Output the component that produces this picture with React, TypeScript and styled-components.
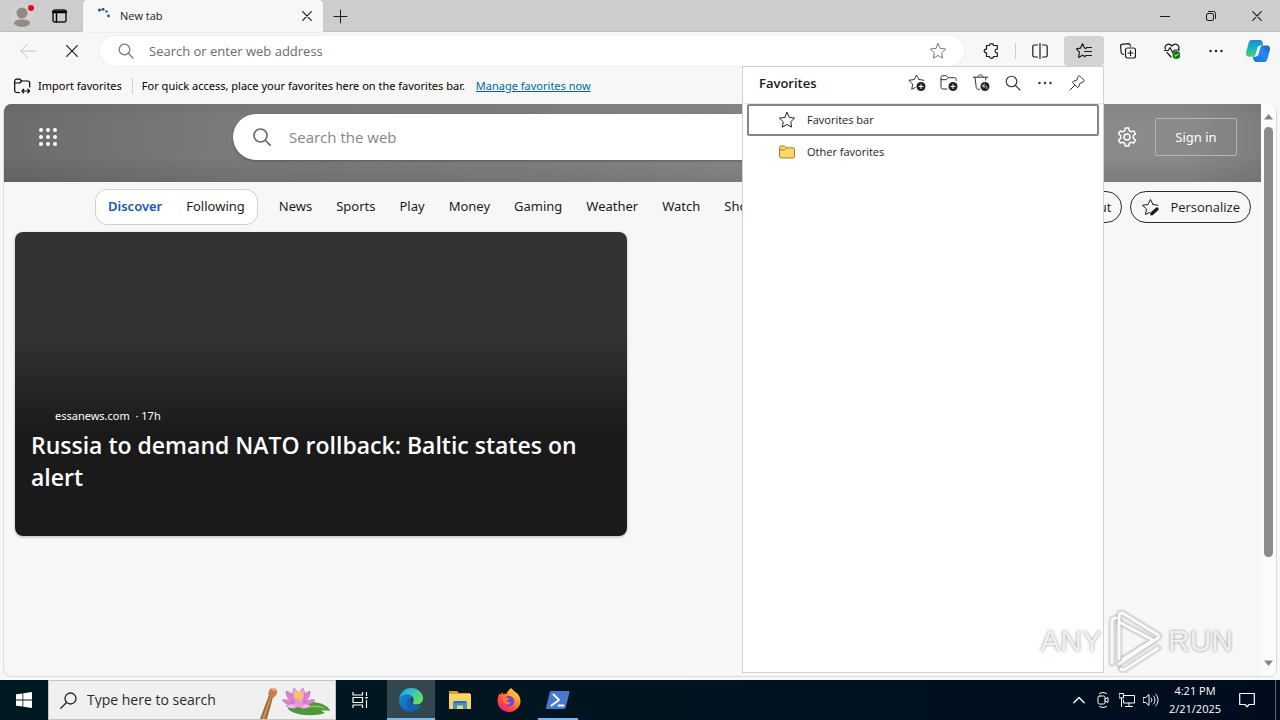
import React from 'react';
import styled, { createGlobalStyle, css } from 'styled-components';

const GlobalStyle = createGlobalStyle`
  *, *::before, *::after { box-sizing: border-box; }
  body { margin: 0; background: #f7f7f7; color: #1b1b1b; font: 12px/16px "Open Sans", "Noto Sans", sans-serif; }
  button { border: 0; background: none; padding: 0; color: inherit; font: inherit; }
  input { border: 0; background: none; padding: 0; outline: 0; color: inherit; font: inherit; min-width: 0; }
  svg { display: block; flex: none; }
  ul { list-style: none; margin: 0; padding: 0; }
`;

const NOTO = '"Noto Sans", "Open Sans", sans-serif';

/* ---------- icon base ---------- */

type IconProps = { size?: number; w?: number; h?: number; stroke?: number; children: React.ReactNode };
const Icon = ({ size = 16, w, h, stroke = 1, children }: IconProps) => (
  <svg
    width={w ?? size}
    height={h ?? size}
    viewBox={`0 0 ${w ?? size} ${h ?? size}`}
    fill="none"
    stroke="currentColor"
    strokeWidth={stroke}
    strokeLinecap="round"
    strokeLinejoin="round"
    aria-hidden="true"
  >
    {children}
  </svg>
);

const STAR = 'M8 .5l2.300 4.900 5.300.7-3.900 3.700 1 5.300L8 12.500l-4.700 2.600 1-5.300L.4 6.100l5.300-.7z';

const StarIcon = () => <Icon><path d={STAR} /></Icon>;

const SearchIcon = ({ stroke = 1 }: { stroke?: number }) => (
  <Icon stroke={stroke}><circle cx="6.500" cy="6.500" r="5.300" /><path d="M10.500 10.500l4.500 4.500" /></Icon>
);

const BadgePlus = () => (
  <g><circle cx="13" cy="12.500" r="4.500" fill="#222" stroke="none" /><path d="M13 10.500v4M11 12.500h4" stroke="#fff" /></g>
);

const DotsIcon = () => (
  <Icon><g fill="currentColor" stroke="none"><circle cx="2.500" cy="8" r="1.200" /><circle cx="8" cy="8" r="1.200" /><circle cx="13.500" cy="8" r="1.200" /></g></Icon>
);

const CloseIcon = ({ size = 10 }: { size?: number }) => (
  <Icon size={size} stroke={1.200}><path d={`M.7 .7L${size - 0.7} ${size - 0.7}M${size - 0.7} .7L.7 ${size - 0.7}`} /></Icon>
);

/* ---------- shell ---------- */

const Screen = styled.div`
  display: flex;
  flex-direction: column;
  min-height: 100vh;
`;

const Browser = styled.div`
  position: relative;
  flex: 1;
  display: flex;
  flex-direction: column;
  background: #f7f7f7;
  padding-bottom: 3px;
`;

const TabStrip = styled.header`
  display: flex;
  height: 32px;
  background: #cdcdcd;
  box-shadow: inset 0 -1px #bdbdbd;
`;

const StripTools = styled.div`
  display: flex;
  align-items: center;
  width: 83px;
  padding-left: 10px;
  gap: 16px;
`;

const Tab = styled.div`
  display: flex;
  align-items: center;
  width: 240px;
  padding: 0 11px 0 14px;
  background: #f7f7f7;
  border-radius: 4px 4px 0 0;
  box-shadow: 0 0 1px #999;
`;

const TabTitle = styled.span`
  flex: 1;
  margin-left: 9px;
  font-size: 11px;
`;

const NewTabButton = styled.button`
  width: 34px;
  display: grid;
  place-items: center;
`;

const WindowControls = styled.div`
  display: flex;
  margin-left: auto;
`;

const WindowButton = styled.button`
  width: 46px;
  display: grid;
  place-items: center;
`;

const Toolbar = styled.div`
  display: flex;
  align-items: center;
  gap: 4px;
  height: 38px;
  padding: 0 4px 0 8px;
`;

const ToolButton = styled.button<{ $active?: boolean; $width?: number }>`
  width: ${(p) => p.$width ?? 40}px;
  height: 30px;
  display: grid;
  place-items: center;
  border-radius: 4px;
  background: ${(p) => (p.$active ? '#d3d3d3' : 'transparent')};
  &:disabled { color: #c4c4c4; }
`;

const ToolDivider = styled.span`
  width: 1px;
  height: 16px;
  background: #cfcfcf;
`;

const AddressBar = styled.label`
  flex: 1;
  display: flex;
  align-items: center;
  gap: 15px;
  height: 30px;
  margin: 0 3px 0 4px;
  padding: 0 18px;
  border-radius: 15px;
  background: #fff;
  box-shadow: 0 0 2px #e2e2e2;
  color: #767676;
`;

const AddressInput = styled.input`
  flex: 1;
  font-size: 13px;
  &::placeholder { color: #6b6b6b; opacity: 1; }
`;

const FavoritesBar = styled.div`
  display: flex;
  align-items: center;
  height: 34px;
  padding: 0 14px 2px;
  color: #000;
  font-family: ${NOTO};
  font-size: 11px;
`;

const ImportButton = styled.button`
  display: flex;
  align-items: center;
  gap: 7px;
  padding-right: 10px;
  margin-right: 9px;
  border-right: 1px solid #cfcfcf;
`;

const ManageLink = styled.a`
  margin-left: 11px;
  color: #0067a5;
`;

/* ---------- page ---------- */

const Page = styled.main`
  flex: 1;
  display: flex;
  margin: 0 3px;
  border: 1px solid #dcdcdc;
  border-top: 0;
  border-radius: 8px;
  overflow: hidden;
`;

const PageBody = styled.div`
  flex: 1;
  min-width: 0;
`;

const Hero = styled.div`
  display: grid;
  grid-template-columns: 229px minmax(0, 1fr) 229px;
  align-items: start;
  height: 78px;
  padding-top: 10px;
  background:
    linear-gradient(rgba(0, 0, 0, 0.05), transparent 20%, transparent 65%, rgba(0, 0, 0, 0.1)),
    linear-gradient(90deg, #6c6c6c, #7b7b7b 18%, #808080 40%, #8a8a8a 62%, #8a8a8a 94%, #7e7e7e);
`;

const WaffleButton = styled.button`
  width: 46px;
  height: 46px;
  margin-left: 21px;
  display: grid;
  place-items: center;
  color: #fff;
`;

const WebSearch = styled.label`
  display: flex;
  align-items: center;
  gap: 18px;
  height: 46px;
  padding: 0 20px;
  border-radius: 23px;
  background: #fff;
  color: #6b6b6b;
  box-shadow: 0 1px 3px rgba(0, 0, 0, 0.3);
`;

const WebSearchInput = styled.input`
  flex: 1;
  font-size: 15px;
  &::placeholder { color: #858585; opacity: 1; }
`;

const HeroActions = styled.div`
  display: flex;
  align-items: center;
  justify-content: flex-end;
  gap: 18px;
  height: 46px;
  padding-right: 24px;
  color: #fff;
`;

const SignInButton = styled.button`
  width: 82px;
  height: 38px;
  border: 1px solid #b4b4b4;
  border-radius: 2px;
  font-family: ${NOTO};
  font-size: 13px;
`;

const FeedNav = styled.nav`
  display: flex;
  align-items: center;
  height: 50px;
  padding: 0 10px 0 91px;
  font-family: ${NOTO};
  font-size: 13px;
  white-space: nowrap;
`;

const FeedSwitch = styled.div`
  display: flex;
  gap: 24px;
  height: 36px;
  padding: 0 12px 2px;
  border: 1px solid #cdd0d6;
  border-radius: 12px;
  background: #fff;
`;

const FeedTab = styled.button<{ $selected?: boolean }>`
  ${(p) => p.$selected && css`color: #1757b8; font-weight: 600;`}
`;

const Topics = styled.ul`
  display: flex;
  gap: 24px;
  margin-left: 21px;
  padding-bottom: 2px;
`;

const TopicLink = styled.a`
  color: inherit;
  text-decoration: none;
`;

const NavActions = styled.div`
  display: flex;
  gap: 8px;
  margin-left: auto;
`;

const PillButton = styled.button`
  display: flex;
  align-items: center;
  gap: 9px;
  height: 32px;
  padding: 0 10px;
  border: 1px solid #2b2b2b;
  border-radius: 16px;
  font-family: "Open Sans", sans-serif;
`;

const Feed = styled.section`
  padding: 0 11px 24px;
`;

const NewsCard = styled.article`
  display: flex;
  flex-direction: column;
  justify-content: flex-end;
  width: 612px;
  max-width: 100%;
  min-height: 304px;
  padding: 16px 16px 43px;
  border-radius: 8px;
  background: linear-gradient(#333 0, #333 33%, #1a1a1a 66%);
  box-shadow: 0 1px 3px rgba(0, 0, 0, 0.25);
  color: #fff;
`;

const Source = styled.div`
  padding-left: 24px;
  margin-bottom: 5px;
  font-family: ${NOTO};
  font-size: 11px;
`;

const Headline = styled.h2`
  margin: 0;
  font-size: 23px;
  line-height: 32px;
  font-weight: 600;
`;

const ScrollTrack = styled.div`
  display: flex;
  flex-direction: column;
  align-items: center;
  width: 15px;
  padding: 10px 0;
  background: #fcfcfc;
  color: #858585;
`;

const ScrollThumb = styled.div`
  width: 9px;
  flex: 0 1 430px;
  margin: 7px 0 auto;
  border-radius: 5px;
  background: #8b8b8b;
`;

/* ---------- favorites flyout ---------- */

const Flyout = styled.aside`
  position: absolute;
  top: 66px;
  right: 176px;
  bottom: 7px;
  width: 362px;
  border: 1px solid #d2d2d2;
  background: #fff;
`;

const FlyoutHeader = styled.div`
  display: flex;
  align-items: center;
  height: 37px;
  padding: 0 10px 4px 16px;
  border-bottom: 1px solid #e6e6e6;
`;

const FlyoutTitle = styled.h1`
  flex: 1;
  margin: 0;
  font-size: 13px;
  line-height: 18px;
  font-weight: 600;
`;

const FlyoutButton = styled.button`
  width: 32px;
  height: 32px;
  display: grid;
  place-items: center;
  color: #333;
`;

const FolderList = styled.ul`
  padding: 0 4px;
`;

const FolderRow = styled.button<{ $focused?: boolean }>`
  display: flex;
  align-items: center;
  gap: 12px;
  width: 100%;
  height: 32px;
  padding-left: 30px;
  border: 2px solid ${(p) => (p.$focused ? '#868686' : 'transparent')};
  border-radius: 2px;
  font-size: 11px;
  color: #222;
`;

/* ---------- watermark ---------- */

const Watermark = styled.div`
  position: absolute;
  right: 47px;
  bottom: 7px;
  display: flex;
  align-items: center;
  gap: 5px;
  color: rgba(250, 250, 250, 0.9);
  font: 30px/64px "Liberation Sans Narrow", "Liberation Sans", sans-serif;
  text-shadow: 0 0 3px rgba(0, 0, 0, 0.45);
  pointer-events: none;
`;

/* ---------- taskbar ---------- */

const Taskbar = styled.footer`
  display: flex;
  height: 40px;
  background: linear-gradient(90deg, #001820, #001420 50%, #000c1e);
  color: #fff;
`;

const TaskButton = styled.button<{ $active?: boolean }>`
  width: 48px;
  display: grid;
  place-items: center;
  background: ${(p) => (p.$active ? '#33474f' : 'transparent')};
  box-shadow: ${(p) => (p.$active ? 'inset 0 -2px #76b9ed' : 'none')};
`;

const AppButtons = styled.div`
  display: flex;
  gap: 1px;
  margin-left: 3px;
`;

const RunningMark = styled.span`
  display: grid;
  place-items: center;
  width: 40px;
  height: 40px;
  box-shadow: inset 0 -2px #76b9ed;
`;

const TaskSearch = styled.label`
  display: flex;
  align-items: center;
  gap: 10px;
  width: 288px;
  padding-left: 11px;
  border: 1px solid #c4c4c4;
  background: #f0f0f0;
  color: #222;
`;

const TaskSearchInput = styled.input`
  flex: 1;
  font-size: 14px;
  &::placeholder { color: #2b2b2b; opacity: 1; }
`;

const Tray = styled.div`
  display: flex;
  align-items: center;
  margin-left: auto;
`;

const TrayButton = styled.button`
  width: 24px;
  height: 40px;
  display: grid;
  place-items: center;
`;

const Clock = styled.time`
  width: 64px;
  text-align: center;
  font-size: 11px;
  line-height: 18px;
`;

const NotificationButton = styled(TrayButton)`
  width: 40px;
`;

const ShowDesktop = styled.button`
  width: 5px;
  height: 40px;
  margin-left: 8px;
  border-left: 1px solid #5a6470;
`;

/* ---------- drawings ---------- */

const Avatar = () => (
  <svg width="26" height="26" viewBox="0 0 26 26" aria-hidden="true">
    <circle cx="12" cy="13" r="12" fill="#d3d0ce" />
    <circle cx="12" cy="10" r="5.500" fill="#8f8b88" />
    <path d="M4 20.500c0-3 3-4 8-4s8 1 8 4c-1.500 2-4.500 3.500-8 3.500s-6.500-1.500-8-3.500z" fill="#8f8b88" />
    <circle cx="21" cy="5" r="3" fill="#e00b1c" />
  </svg>
);

const Spinner = () => (
  <svg width="14" height="18" viewBox="0 0 14 18" fill="#235a94" aria-hidden="true">
    <circle cx="2.500" cy="3" r="1.600" /><circle cx="6" cy="2.200" r="1.500" /><circle cx="9.500" cy="4.500" r="1.200" /><circle cx="11.500" cy="9" r="1.400" />
  </svg>
);

const Copilot = () => (
  <svg width="26" height="24" viewBox="0 0 26 24" aria-hidden="true">
    <defs>
      <linearGradient id="cpA" x1="0" y1="0" x2="0" y2="1"><stop offset="0" stopColor="#1c87d6" /><stop offset=".5" stopColor="#18b6c0" /><stop offset="1" stopColor="#4fd06b" /></linearGradient>
      <linearGradient id="cpB" x1="1" y1="0" x2="0" y2="1"><stop offset="0" stopColor="#1557a8" /><stop offset=".5" stopColor="#2a87ee" /><stop offset="1" stopColor="#1a6ee0" /></linearGradient>
    </defs>
    <path d="M6.500 1h8.200c1.500 0 2.300 1 2.700 2.400l.9 3.100h-2.600c-1.900 0-2.900 1-3.400 2.700L10.700 15c-.6 2-1.500 2.800-3.400 2.800H4.200C1.500 17.800.5 15.800 1.200 13L3.600 4C4.200 2 5 1 6.500 1z" fill="url(#cpA)" />
    <path d="M14.500 1c1.600 0 2.500.8 2.900 2.400l.9 3.100h3.500c2.700 0 3.700 2 3 4.700L22.400 20c-.5 2-1.400 3-3 3h-8.100c-1.500 0-2.300-1-2.700-2.400l-.8-2.800h2.400c1.900 0 2.900-1 3.400-2.700l1.700-5.900c.5-1.800 1.300-2.700 3-2.700l-1.200-3.200C16.700 2 16 1 14.500 1z" fill="url(#cpB)" />
  </svg>
);

const PaintAndLotus = () => (
  <svg width="76" height="38" viewBox="0 0 76 38" aria-hidden="true">
    <path d="M1 38l9-24 4 2-6 22z" fill="#9a6738" />
    <path d="M3 38l8-22 1.500.7L5.500 38z" fill="#c9935a" />
    <path d="M9.500 14c-.5-4 1.500-7 4.500-7 4 0 5 3 3.500 6-1 2.500-2.500 4-4.500 3.500s-3.300-1.200-3.500-2.500z" fill="#cf7b50" />
    <path d="M12 7.500c3-1.500 6-.3 6 2-2 1-4 .5-6-2z" fill="#e8b28f" />
    <path d="M29 27c6-4 20-8 31-5 5 1.500 10 4 11 8-4-1-5 0-9-1 2 2 3 2 4 3-8 3-22 3-30 0-4-1.500-7-3-7-5z" fill="#4c9a35" />
    <path d="M45 27c7-3 15-4 23 1-8-2-14-2-23-1z" fill="#8cc864" />
    <g fill="#dd83cb" stroke="#b557a8" strokeWidth=".5">
      <path d="M40 25c-7 1-14-2-17-6 6-1 12 1 17 6z" /><path d="M40 25c7 1 13-2 16-6-6-1-11 1-16 6z" />
      <path d="M40 25c-8-3-13-8-13-15 7 2 12 8 13 15z" /><path d="M40 25c7-4 12-9 11-15-7 2-11 8-11 15z" />
      <path d="M40 25c-6-6-8-12-5-18 5 4 7 11 5 18z" fill="#eba5dc" /><path d="M40 25c-3-7-1-14 4-18 3 6 2 12-4 18z" fill="#eba5dc" />
      <path d="M39 26c-6 3-9 1-12-1 4-3 8-3 12 1z" fill="#f0b8e4" /><path d="M40 26c5 3 9 1 12-1-4-3-9-3-12 1z" fill="#f0b8e4" />
    </g>
    <path d="M36 10l3 2 2-3 1 4 2 2-4 4-5-4z" fill="#f6c945" />
    <path d="M34 24c2-5 10-5 12 0-3 3-9 3-12 0z" fill="#e996d7" />
  </svg>
);

const EdgeLogo = () => (
  <svg width="24" height="24" viewBox="0 0 24 24" aria-hidden="true">
    <defs>
      <linearGradient id="edgeTop" x1="0" y1="0" x2="1" y2=".5"><stop offset="0" stopColor="#1b9de2" /><stop offset=".5" stopColor="#35c1c8" /><stop offset="1" stopColor="#66de62" /></linearGradient>
      <linearGradient id="edgeLow" x1="0" y1="0" x2="1" y2="1"><stop offset="0" stopColor="#1a86dc" /><stop offset="1" stopColor="#0d57a6" /></linearGradient>
    </defs>
    <path d="M.2 11C.8 4.800 5.800 0 12 0c7 0 12 5 12 10.300 0 4-3 6.200-6.300 6.200-2.300 0-4-.8-4-1.800 0-.7 1-1 1-3 0-2.500-2.400-4.900-6-4.900C5 6.800 1.500 8.500.2 11z" fill="url(#edgeTop)" />
    <path d="M.1 12C.3 8.500 4.500 6.500 8.700 6.800c2.300.1 4.300 1.200 5.300 2.700-2.500-.6-5.500 1.300-5.500 5 0 4.500 4 7.500 8.500 7.500C15.500 23.300 13.800 24 12 24 5.300 24-.2 18.700.1 12z" fill="url(#edgeLow)" />
    <path d="M8.500 14.500c0-2.300 1.200-4 2.900-4.800-.7 3.800 2.300 8.300 6.900 8.300 1.900 0 3-.6 3.900-1 .4 0 .5.300.3.600C21.300 19.500 19.300 21.500 17 22c-4.500 0-8.500-3-8.500-7.500z" fill="#1464b4" />
  </svg>
);

const ExplorerLogo = () => (
  <svg width="22" height="20" viewBox="0 0 22 20" aria-hidden="true">
    <path d="M0 1h8l2 2h11v6H0z" fill="#e59a21" />
    <path d="M0 4h22v15H0z" fill="#fbd463" />
    <path d="M4 11.500h14V19h-4v-3.500H8V19H4z" fill="#3b94d4" />
    <path d="M5 11h12v2H5z" fill="#1f75b9" />
  </svg>
);

const FirefoxLogo = () => (
  <svg width="24" height="24" viewBox="0 0 24 24" aria-hidden="true">
    <defs><linearGradient id="ffFlame" x1="1" y1="0" x2=".2" y2="1"><stop offset="0" stopColor="#fff24a" /><stop offset=".4" stopColor="#ff9a2e" /><stop offset=".7" stopColor="#ff4a3d" /><stop offset="1" stopColor="#e4218c" /></linearGradient></defs>
    <path d="M14 0c2 2 3 3 4.500 4.200C21 5.500 23.500 9 23.500 13c0 6-5 11-11.500 11S.5 19 .5 12.800C.5 9.500 1.500 7 3 5l.3 2L5.500 4 6 6.300c1-.5 2-.7 3.500-.3C10 3.500 12 2 14 0z" fill="url(#ffFlame)" />
    <circle cx="12" cy="13" r="5.300" fill="#7a3fe0" />
    <path d="M6 9.500c3-.5 5 .2 6.500 1.500-1 .5-2.500 1-3 1.500.5 1.500 2.500 2 4.500 1.500-1 3-5 3.500-7 1C6 13.500 5.500 11.500 6 9.500z" fill="#ff7a2e" />
    <path d="M12 7.500c3 0 5.500 2.500 5.500 5.500 1-3-.5-7-3.500-8.500 0 1.500-1 2.500-2 3z" fill="#ffb72e" />
  </svg>
);

const PowerShellLogo = () => (
  <svg width="24" height="20" viewBox="0 0 24 20" aria-hidden="true">
    <path d="M5.500 1h17c.8 0 1.200.6 1 1.400L19.700 17.500c-.2.900-1 1.500-1.800 1.500h-17c-.7 0-1-.6-.9-1.400L3.700 2.500C3.900 1.600 4.600 1 5.500 1z" fill="#4a78cc" />
    <path d="M7.500 4.500l5.500 5.500-7.500 5.500M12.500 15.500h5" fill="none" stroke="#fff" strokeWidth="1.800" strokeLinecap="round" strokeLinejoin="round" />
  </svg>
);

const PlayMark = () => (
  <svg width="56" height="64" viewBox="0 0 56 64" fill="none" strokeLinejoin="round" strokeLinecap="round" aria-hidden="true">
    {[{ c: 'rgba(120,120,120,.14)', w: 8 }, { c: 'rgba(120,120,120,.22)', w: 5 }, { c: '#fafafa', w: 3 }].map((s) => (
      <g key={s.w} stroke={s.c} strokeWidth={s.w}>
        <path d="M5 54V13c0-3 1-4 4-4" />
        <path d="M12 50V7c0-3 2-4 5-2l34 21c2 1 1 2 0 3L12 55" />
        <path d="M12 13l34 18-30 19" />
        <path d="M14 60c1 2 4 1 6-1l31-20" />
      </g>
    ))}
  </svg>
);

const topics = ['News', 'Sports', 'Play', 'Money', 'Gaming', 'Weather', 'Watch', 'Shopping'];

/* ---------- sections ---------- */

const Tabs = () => (
  <TabStrip>
    <StripTools>
      <button aria-label="Profile"><Avatar /></button>
      <button aria-label="Tab actions">
        <Icon w={16} h={14} stroke={1.5}><rect x="1" y="1" width="13" height="12" rx="2" /><path d="M1 3h13" stroke="#000" strokeWidth="2.500" /><path d="M4.500 4v9" stroke="#000" /></Icon>
      </button>
    </StripTools>
    <Tab>
      <Spinner />
      <TabTitle>New tab</TabTitle>
      <button aria-label="Close tab"><CloseIcon /></button>
    </Tab>
    <NewTabButton aria-label="New tab"><Icon><path d="M8.500 2v13M2 8.500h13" /></Icon></NewTabButton>
    <WindowControls>
      <WindowButton aria-label="Minimize"><Icon size={10}><path d="M0 5.500h10" /></Icon></WindowButton>
      <WindowButton aria-label="Restore"><Icon size={10}><rect x=".5" y="2.500" width="7" height="7" rx="1.500" /><path d="M2.500 .5h5a2 2 0 0 1 2 2v5" /></Icon></WindowButton>
      <WindowButton aria-label="Close"><CloseIcon /></WindowButton>
    </WindowControls>
  </TabStrip>
);

const AddressRow = () => (
  <Toolbar>
    <ToolButton disabled aria-label="Back"><Icon><path d="M15.500 8H.8M7.500 1.200L.7 8l6.800 6.800" /></Icon></ToolButton>
    <ToolButton aria-label="Stop"><CloseIcon size={12} /></ToolButton>
    <AddressBar>
      <SearchIcon stroke={1.200} />
      <AddressInput type="text" placeholder="Search or enter web address" aria-label="Address" />
      <StarIcon />
    </AddressBar>
    <ToolButton aria-label="Extensions">
      <Icon stroke={1.200}><path d="M3.500 2.500h3c0-2.500 4-2.500 4 0h3.800v3.700c-2.900-.3-2.900 3.900 0 3.600v3.700h-3.800c0 2.500-4 2.500-4 0h-3v-3.700c-3 0-3-3.600 0-3.600z" /></Icon>
    </ToolButton>
    <ToolDivider />
    <ToolButton aria-label="Split screen">
      <Icon stroke={1.2}><path d="M5.500 2h-3A1.700 1.700 0 0 0 .8 3.700v8.600A1.700 1.700 0 0 0 2.500 14h3M10.500 2h3a1.700 1.700 0 0 1 1.700 1.700v8.600a1.700 1.700 0 0 1-1.700 1.700h-3M8 .5v15" /></Icon>
    </ToolButton>
    <ToolButton $active aria-label="Favorites" aria-expanded="true">
      <Icon stroke={1.200}><path d="M10.300 5.500L8.700 5.200 6.500.7 4.400 5.200.4 5.900l3 3.300-.8 5.300 4-2.300 2.700 1.600M10.500 4.500h5M8.500 8.500h7M9.500 12.500h6" /></Icon>
    </ToolButton>
    <ToolButton aria-label="Collections">
      <Icon stroke={1.200}><path d="M3.500 11.500L2.200 11C1.500 10.700 1.300 10 1.200 9.500L.5 3.200C.4 2 1 1.500 2 1.300L8.500.6c1 0 1.500.5 1.700 1.500l.2 1" /><rect x="5.500" y="5" width="10" height="10" rx="2" /><path d="M10.500 7.500v5M8 10h5" /></Icon>
    </ToolButton>
    <ToolButton aria-label="Browser essentials">
      <Icon><path d="M1.500 6C-.5 2.500 4.500-1 8 3c3.500-4 8.500-.5 6.500 3M3 9.500l4 4.500M.5 7.500h3.700L6 4.500l2.700 5L10.500 7h5" strokeWidth="1.200" /><circle cx="12.500" cy="12" r="4" fill="#127a12" stroke="none" /><path d="M10.800 12.200l1.200 1.100 2.300-2.400" stroke="#fff" /></Icon>
    </ToolButton>
    <ToolButton aria-label="Settings and more"><DotsIcon /></ToolButton>
    <ToolButton $width={36} aria-label="Copilot"><Copilot /></ToolButton>
  </Toolbar>
);

const FavoritesStrip = () => (
  <FavoritesBar>
    <ImportButton>
      <Icon w={17} h={16} stroke={1.200}><path d="M5.500 14.500h-3A2 2 0 0 1 .7 12.500V3A2 2 0 0 1 2.500 1.200h3.300L7.700 3h6a2 2 0 0 1 2 2v4M.7 5h5L7.700 3M8 13h7.500M9.700 11.200L8 13l1.700 1.800M13.800 11.200l1.700 1.800-1.700 1.800" /></Icon>
      Import favorites
    </ImportButton>
    <span>For quick access, place your favorites here on the favorites bar.</span>
    <ManageLink href="#favorites">Manage favorites now</ManageLink>
  </FavoritesBar>
);

const NewTabPage = () => (
  <Page>
    <PageBody>
      <Hero>
        <WaffleButton aria-label="App launcher">
          <Icon size={18}><g fill="currentColor" stroke="none">{[2, 9, 16].map((y) => [2, 9, 16].map((x) => <circle key={`${x}-${y}`} cx={x} cy={y} r="2" />))}</g></Icon>
        </WaffleButton>
        <WebSearch>
          <Icon size={18} stroke={1.700}><circle cx="7.500" cy="7.500" r="6.500" /><path d="M12.500 12.500L17.300 17.300" /></Icon>
          <WebSearchInput type="search" placeholder="Search the web" aria-label="Search the web" />
        </WebSearch>
        <HeroActions>
          <button aria-label="Page settings">
            <Icon size={20} stroke={1.500}><path d="M8.300 1h3.400l.5 2.700 1.900 1.100 2.600-.9 1.700 3-2.100 1.800v2.600l2.100 1.800-1.700 3-2.600-.9-1.900 1.100-.5 2.700H8.300l-.5-2.700-1.900-1.100-2.600.9-1.700-3 2.100-1.800V8.700L1.600 6.900l1.700-3 2.600.9 1.900-1.100z" /><circle cx="10" cy="10" r="3" /></Icon>
          </button>
          <SignInButton>Sign in</SignInButton>
        </HeroActions>
      </Hero>
      <FeedNav>
        <FeedSwitch>
          <FeedTab $selected>Discover</FeedTab>
          <FeedTab>Following</FeedTab>
        </FeedSwitch>
        <Topics>
          {topics.map((t) => <li key={t}><TopicLink href={`#${t.toLowerCase()}`}>{t}</TopicLink></li>)}
        </Topics>
        <NavActions>
          <PillButton>Feed layout</PillButton>
          <PillButton>
            <Icon w={20} h={18}><path d="M12 6.500L9.500 1.500 7 6.500 1.500 7.300l4 3.700-1 5.500 4-2M12 6.500l5 .8" /><path d="M11 15.500l5-4.500" strokeWidth="3.500" /><path d="M9.500 17l2-1" /></Icon>
            Personalize
          </PillButton>
        </NavActions>
      </FeedNav>
      <Feed>
        <NewsCard>
          <Source>essanews.com &nbsp;·&nbsp;17h</Source>
          <Headline>Russia to demand NATO rollback: Baltic states on alert</Headline>
        </NewsCard>
      </Feed>
    </PageBody>
    <ScrollTrack>
      <svg width="9" height="6" viewBox="0 0 9 6" fill="currentColor"><path d="M4.500 0L9 5.500H0z" /></svg>
      <ScrollThumb />
      <svg width="9" height="6" viewBox="0 0 9 6" fill="currentColor"><path d="M4.500 6L9 .5H0z" /></svg>
    </ScrollTrack>
  </Page>
);

const FavoritesFlyout = () => (
  <Flyout>
    <FlyoutHeader>
      <FlyoutTitle>Favorites</FlyoutTitle>
      <FlyoutButton aria-label="Add this page"><Icon size={18}><path d="M11 5.500L8.500 1 6.300 5.500.8 6.300l3.900 3.800-1 5.200 3.500-1.800M11 5.500l4.800.8" /><BadgePlus /></Icon></FlyoutButton>
      <FlyoutButton aria-label="Add folder"><Icon size={18}><path d="M7 15H2.800A1.800 1.800 0 0 1 1 13.200V3.500a1.800 1.800 0 0 1 1.800-1.800h3.500l2 2h6.200a1.800 1.800 0 0 1 1.800 1.800v1M1 5.700h5.300l2-2" /><BadgePlus /></Icon></FlyoutButton>
      <FlyoutButton aria-label="Deleted favorites"><Icon size={18}><path d="M1.200 3.200h14.600M6 3c0-3 5-3 5 0M3 3.200l1.300 10.500c.1 1 .8 1.600 1.700 1.600h1.500M14 3.200l-.5 3" /><circle cx="13" cy="12.500" r="4.500" fill="#222" stroke="none" /><path d="M15 14.800c.5-2.500-1-3.300-4-3M12.500 10l-2 1.800 2 2" stroke="#fff" strokeWidth=".8" /></Icon></FlyoutButton>
      <FlyoutButton aria-label="Search favorites"><SearchIcon stroke={1.100} /></FlyoutButton>
      <FlyoutButton aria-label="More options"><DotsIcon /></FlyoutButton>
      <FlyoutButton aria-label="Pin"><Icon><path d="M9.500 1.100c.4-.4 1-.4 1.400 0l4 4c.5.500.4 1.200-.2 1.500L10.800 8.500 9.500 12c-.2.600-.8.700-1.300.3L3.700 7.800c-.4-.5-.3-1 .3-1.300l3.500-1.300zM5.800 10.200L.8 15.200" /></Icon></FlyoutButton>
    </FlyoutHeader>
    <FolderList>
      <li><FolderRow $focused><StarIcon />Favorites bar</FolderRow></li>
      <li>
        <FolderRow>
          <Icon><path d="M.5 3.500a1.500 1.500 0 0 1 1.500-1.500h3.500L7.500 3.800H14a1.500 1.500 0 0 1 1.500 1.500v7.200A1.500 1.500 0 0 1 14 14H2a1.500 1.500 0 0 1-1.500-1.500z" fill="#fbd66c" stroke="#a98222" /><path d="M.8 5.800h4.700l2-2" stroke="#a98222" /></Icon>
          Other favorites
        </FolderRow>
      </li>
    </FolderList>
  </Flyout>
);

const WindowsTaskbar = () => (
  <Taskbar>
    <TaskButton aria-label="Start">
      <svg width="16" height="16" viewBox="0 0 16 16" fill="#fff"><path d="M0 2.300L6.500 1.400V7.600H0zM7.300 1.300L16 0v7.600H7.300zM0 8.400h6.500v6.200L0 13.700zM7.300 8.400H16V16l-8.700-1.300z" /></svg>
    </TaskButton>
    <TaskSearch>
      <Icon size={17} stroke={1.300}><circle cx="10.500" cy="6.500" r="5.500" /><path d="M6.500 10.500L.8 16.200" /></Icon>
      <TaskSearchInput type="search" placeholder="Type here to search" aria-label="Type here to search" />
      <PaintAndLotus />
    </TaskSearch>
    <TaskButton aria-label="Task view">
      <Icon stroke={1.200}><path d="M1 .5V3h9.500V.5M1 15.500V13h9.500v2.500M1 5.500h9.500v5H1zM14.500 .5v3M14.500 8.500v7" /><path d="M14.500 5v1.500" strokeWidth="2.500" strokeLinecap="butt" /></Icon>
    </TaskButton>
    <AppButtons>
      <TaskButton $active aria-label="Microsoft Edge"><EdgeLogo /></TaskButton>
      <TaskButton aria-label="File Explorer"><ExplorerLogo /></TaskButton>
      <TaskButton aria-label="Firefox"><FirefoxLogo /></TaskButton>
      <TaskButton aria-label="PowerShell"><RunningMark><PowerShellLogo /></RunningMark></TaskButton>
    </AppButtons>
    <Tray>
      <TrayButton aria-label="Show hidden icons"><Icon w={12} h={8} stroke={1.300}><path d="M.8 6.800L6 1.500l5.200 5.300" /></Icon></TrayButton>
      <TrayButton aria-label="Meet now"><Icon w={12} h={16}><path d="M2.500 1.500c2-1.300 5-1.300 7 0M2.500 14.500c2 1.300 5 1.300 7 0" /><rect x="1" y="4" width="7" height="8" rx="1.500" /><path d="M8 7l3-1.500v5L8 9" /></Icon></TrayButton>
      <TrayButton aria-label="Network"><Icon><path d="M5 3.500h10.500v7.500H4.500V8M10 11v3M6.500 14.500h7M.5 1.500h4v4.500h-4zM2.500 6v8.500" /></Icon></TrayButton>
      <TrayButton aria-label="Volume"><Icon><path d="M.5 5.500h2.200L6 2.500v11l-3.300-3H.5zM8.200 6c1 1.200 1 2.800 0 4M10.500 4c2 2.300 2 5.700 0 8M12.800 2.200c3 3.400 3 8.200 0 11.600" /></Icon></TrayButton>
      <Clock>4:21 PM<br />2/21/2025</Clock>
      <NotificationButton aria-label="Notifications"><Icon stroke={1.200}><path d="M.7 1.500h14.600v11H10L8 14.800 6 12.500H.7z" /></Icon></NotificationButton>
      <ShowDesktop aria-label="Show desktop" />
    </Tray>
  </Taskbar>
);

export default function App() {
  return (
    <Screen>
      <GlobalStyle />
      <Browser>
        <Tabs />
        <AddressRow />
        <FavoritesStrip />
        <NewTabPage />
        <FavoritesFlyout />
        <Watermark><span>ANY</span><PlayMark /><span>RUN</span></Watermark>
      </Browser>
      <WindowsTaskbar />
    </Screen>
  );
}
